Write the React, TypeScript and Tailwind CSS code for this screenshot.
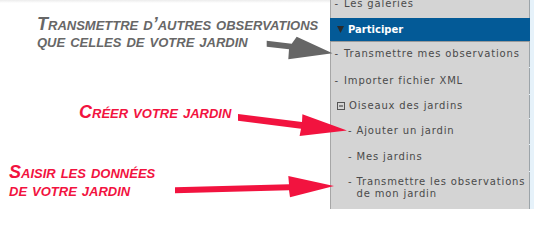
import React from "react";

const Sep = () => (
  <div className="h-px mr-px bg-[#d4d4d4] border-l border-l-[#a6a6a6]" />
);

function Row({
  className,
  children,
}: {
  className: string;
  children: React.ReactNode;
}) {
  return (
    <div
      className={
        "bg-[#d4d4d4] border-l border-r border-l-[#a6a6a6] border-r-[#9ca4a9] " +
        className
      }
    >
      {children}
    </div>
  );
}

function Item({
  dashPad,
  children,
}: {
  dashPad: "top" | "sub";
  children: React.ReactNode;
}) {
  return (
    <div
      className={
        dashPad === "top" ? "flex pl-[3.5px]" : "flex pl-[17px]"
      }
    >
      <span className={dashPad === "top" ? "w-[9.5px] shrink-0" : "w-[8.5px] shrink-0"}>-</span>
      <span className="[letter-spacing:0.85px] whitespace-nowrap">{children}</span>
    </div>
  );
}

export default function App() {
  return (
    <div className="relative w-[534px] h-[209px] overflow-hidden bg-white flex">
      {/* left annotation area */}
      <div className="w-[330px] shrink-0 flex flex-col font-['Liberation_Sans',Arial,sans-serif] font-bold italic text-[18px] [font-variant-caps:small-caps]">
        <div className="h-[3px] bg-linear-to-b from-[#ececec] to-white" />
        <div className="mt-[13px] ml-[37px] leading-[17px] text-[#676767]">
          <div>Transmettre d’autres observations</div>
          <div>que celles de votre jardin</div>
        </div>
        <div className="mt-[53px] ml-[79px] leading-[18px] text-[#f2133f]">
          Créer votre jardin
        </div>
        <div className="mt-[42px] ml-[9px] leading-[18px] text-[#f2133f]">
          <div>Saisir les données</div>
          <div>de votre jardin</div>
        </div>
      </div>

      {/* sidebar */}
      <div className="w-[204px] shrink-0 bg-[#e6f2fa] flex flex-col font-['DejaVu_Sans',Verdana,sans-serif] text-[10px] leading-[13px] text-[#4a4a4a]">
        <div className="w-[200px] flex flex-col">
          <Row className="h-[18px]">
            <div className="-mt-[3px]">
              <Item dashPad="top">Les galeries</Item>
            </div>
          </Row>
          <div className="h-[23px] bg-[#035a97] flex items-center pl-[7px] gap-[4px]">
            <svg width="7" height="7" viewBox="0 0 7 7" className="shrink-0">
              <polygon points="0,0 7,0 3.5,7" fill="#2a2a2a" />
            </svg>
            <span className="text-white font-bold">Participer</span>
          </div>
          <div className="h-px bg-[#9a9a9a]" />
          <Row className="pt-[5px] pb-[7px]">
            <Item dashPad="top">Transmettre mes observations</Item>
          </Row>
          <Sep />
          <Row className="pt-[6px] pb-[7px]">
            <Item dashPad="top">Importer fichier XML</Item>
          </Row>
          <Sep />
          <Row className="pt-[4px] pb-[6px]">
            <div className="flex items-center pl-[6px] gap-[4px]">
              <svg width="8" height="8" viewBox="0 0 8 8" className="shrink-0">
                <rect x="0.5" y="0.5" width="7" height="7" fill="none" stroke="#555" />
                <line x1="2" y1="4" x2="6" y2="4" stroke="#333" />
              </svg>
              <span className="[letter-spacing:0.85px] whitespace-nowrap">Oiseaux des jardins</span>
            </div>
          </Row>
          <Sep />
          <Row className="pt-[5px] pb-[7px]">
            <Item dashPad="sub">Ajouter un jardin</Item>
          </Row>
          <Sep />
          <Row className="pt-[5px] pb-[8px]">
            <Item dashPad="sub">Mes jardins</Item>
          </Row>
          <Sep />
          <Row className="pt-[4px] pb-[10px] leading-[12px]">
            <Item dashPad="sub">
              Transmettre les observations
              <br />
              de mon jardin
            </Item>
          </Row>
        </div>
      </div>

      {/* arrows overlay */}
      <svg
        className="absolute inset-0 pointer-events-none"
        width="534"
        height="209"
        viewBox="0 0 534 209"
      >
        <polygon
          points="266.7,40.7 291.7,43.8 296.7,36.7 332.5,53.3 288.3,59.3 289,49.3 266.7,46.7"
          fill="#666666"
        />
        <polygon
          points="238,114 302,122 302.4,114.3 347,130.5 299.6,136.1 301,128.8 238,120.7"
          fill="#f2133f"
        />
        <polygon
          points="175,187.3 289,184.2 288.3,176 334,186 290,197.3 289,190.2 175,193.3"
          fill="#f2133f"
        />
      </svg>
    </div>
  );
}
